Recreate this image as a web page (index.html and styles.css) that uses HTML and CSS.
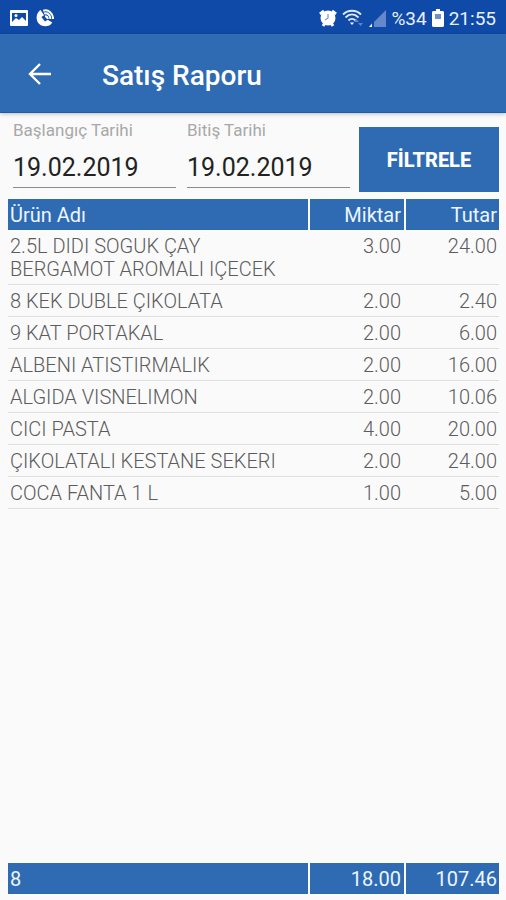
FILE: index.html
```html
<!DOCTYPE html>
<html lang="tr">
<head>
<meta charset="utf-8">
<meta name="viewport" content="width=device-width, initial-scale=1">
<title>Satış Raporu</title>
<link rel="stylesheet" href="styles.css">
</head>
<body>
<div class="status">
  <div class="status-group">
    <svg class="icon-picture" viewBox="0 0 18 16" aria-hidden="true"><path fill="#fff" fill-rule="evenodd" d="M1 0h16a1 1 0 0 1 1 1v14a1 1 0 0 1-1 1H1a1 1 0 0 1-1-1V1a1 1 0 0 1 1-1zM2 3v9l4-4 3 2 3-3 4 4V3z"/><circle cx="6" cy="5.500" r="1.500" fill="#fff"/></svg>
    <svg class="icon-call" viewBox="0 0 20 20" aria-hidden="true"><path fill="#fff" d="M5 1C2 3 0 7 1 12c1 5 6 8 11 7 3 0 5-2 6-4l-5-3-3 2-4-5 3-2z"/><path fill="none" stroke="#fff" stroke-width="2.200" d="M8 2c6-2 11 3 11 9M9 5c4-1 7 2 7 6M10 8c2 0 3 1 3 3"/></svg>
  </div>
  <div class="status-group status-right">
    <svg class="icon-alarm" viewBox="0 0 18 18" aria-hidden="true"><path fill="none" stroke="#fff" stroke-width="3" d="M1 5l4-3M17 5l-4-3M4 17l2-3M14 17l-2-3"/><circle cx="9" cy="9" r="7.500" fill="#fff"/><path fill="none" stroke="#7d9cd4" stroke-width="1.300" d="M9 5v4l-3 2"/></svg>
    <svg class="icon-wifi" viewBox="0 0 22 18" aria-hidden="true"><g fill="none" stroke="#dce8fa" stroke-width="1.800"><path d="M1 5.500c5-5 13-5 18 0M3.500 8.500c4-4 9-4 13 0M6.500 11.500c2-2 5-2 7 0"/></g><path fill="#fff" d="M8 13.500h4L10 16z"/><path fill="#5f86cc" d="M12 13l2.500-3 2.500 3zM16 14h5l-2.500 3z"/></svg>
    <svg class="icon-signal" viewBox="0 0 17 17" aria-hidden="true"><path fill="#6389ca" d="M17 0v17H5v-5z"/><path fill="#fff" d="M3 13.500V17H0z"/></svg>
    <span class="battery-text">%34</span>
    <svg class="icon-battery" viewBox="0 0 12 18" aria-hidden="true"><path fill="#fff" d="M4 0h4v2h3l1 1v14l-1 1H1l-1-1V3l1-1h3z"/><path fill="#7090cc" d="M3 5h6v5H3z"/></svg>
    <span>21:55</span>
  </div>
</div>
<header class="appbar">
  <button class="back" type="button" aria-label="Geri"><svg viewBox="0 0 24 24" aria-hidden="true"><path fill="none" stroke="#fff" stroke-width="2.400" d="M23 12H2M12 2L2 12l10 10"/></svg></button>
  <h1>Satış Raporu</h1>
</header>
<main>
  <form class="filter">
    <div class="field"><label for="start">Başlangıç Tarihi</label><input id="start" type="text" value="19.02.2019"></div>
    <div class="field"><label for="end">Bitiş Tarihi</label><input id="end" type="text" value="19.02.2019"></div>
    <button class="submit" type="button">FİLTRELE</button>
  </form>
  <table class="report">
    <thead><tr><th>Ürün Adı</th><th>Miktar</th><th>Tutar</th></tr></thead>
    <tbody>
      <tr><td>2.5L DIDI SOGUK ÇAY BERGAMOT AROMALI IÇECEK</td><td>3.00</td><td>24.00</td></tr>
      <tr><td>8 KEK DUBLE ÇIKOLATA</td><td>2.00</td><td>2.40</td></tr>
      <tr><td>9 KAT PORTAKAL</td><td>2.00</td><td>6.00</td></tr>
      <tr><td>ALBENI ATISTIRMALIK</td><td>2.00</td><td>16.00</td></tr>
      <tr><td>ALGIDA VISNELIMON</td><td>2.00</td><td>10.06</td></tr>
      <tr><td>CICI PASTA</td><td>4.00</td><td>20.00</td></tr>
      <tr><td>ÇIKOLATALI KESTANE SEKERI</td><td>2.00</td><td>24.00</td></tr>
      <tr><td>COCA FANTA 1 L</td><td>1.00</td><td>5.00</td></tr>
    </tbody>
  </table>
  <table class="report totals">
    <tfoot><tr><td>8</td><td>18.00</td><td>107.46</td></tr></tfoot>
  </table>
</main>
</body>
</html>
```
FILE: styles.css
```css
* { box-sizing: border-box; }
body {
  margin: 0;
  min-height: 100vh;
  display: flex;
  flex-direction: column;
  background: #fafafa;
  color: #5c5c5c;
  font-family: Roboto, "Liberation Sans", sans-serif;
  font-size: 20px;
}
.status {
  display: flex;
  justify-content: space-between;
  align-items: center;
  height: 34px;
  padding: 2px 10px 0;
  background: #104aa8;
  color: #e8f0ff;
  font-size: 19px;
}
.status-group { display: flex; align-items: center; gap: 8px; }
.status-right { gap: 5px; }
.icon-picture { width: 18px; height: 16px; }
.icon-call { width: 18px; height: 18px; }
.icon-alarm { width: 18px; height: 18px; }
.icon-wifi { width: 22px; height: 18px; }
.icon-signal { width: 17px; height: 17px; }
.icon-battery { width: 12px; height: 18px; }
.appbar {
  display: flex;
  align-items: center;
  gap: 50px;
  height: 79px;
  padding: 2px 28px 0;
  background: #2f6bb3;
  border-bottom: 1px solid #1c5ca8;
  box-shadow: 0 1px 4px rgba(0, 0, 0, 0.25);
  color: #fff;
}
.back {
  display: flex;
  width: 24px;
  padding: 0;
  border: 0;
  background: none;
}
.back svg { width: 24px; height: 24px; }
h1 { margin: 0; padding-top: 2px; font-size: 28px; font-weight: 500; }
main {
  flex: 1;
  display: flex;
  flex-direction: column;
  padding: 8px 7px 6px 8px;
}
.filter { display: flex; gap: 11px; padding-left: 5px; }
.field { flex: 1; min-width: 0; }
.field label {
  display: block;
  line-height: 18px;
  color: #a8a8a8;
  font-size: 17px;
}
.field input {
  display: block;
  width: 100%;
  height: 49px;
  padding: 9px 0 0;
  border: 0;
  border-bottom: 1px solid #8c8c8c;
  background: none;
  color: #222;
  font: inherit;
  font-size: 25px;
}
.submit {
  width: 140px;
  height: 65px;
  margin-top: 6px;
  border: 0;
  background: #2f6bb3;
  color: #fff;
  font: inherit;
  font-weight: 800;
}
.filter .submit { margin-left: -2px; }
.report {
  width: 100%;
  margin-top: 7px;
  table-layout: fixed;
  border-collapse: separate;
  border-spacing: 0;
}
.report th, .report td {
  width: 95px;
  padding: 5px 2px 3px;
  line-height: 23px;
  font-weight: 300;
  text-align: right;
  vertical-align: top;
}
.report th:first-child, .report td:first-child { width: auto; text-align: left; }
.report tbody td { border-bottom: 1px solid #dedede; }
.report th, .report tfoot td {
  padding: 5px 2px 3px;
  background: #2f6bb3;
  color: #edf5ff;
  font-weight: 400;
}
.report th + th, .report tfoot td + td { border-left: 2px solid #fafafa; }
.report th:nth-child(2), .report td:nth-child(2) { width: 96px; padding-right: 3px; }
.totals { margin-top: auto; }
```
